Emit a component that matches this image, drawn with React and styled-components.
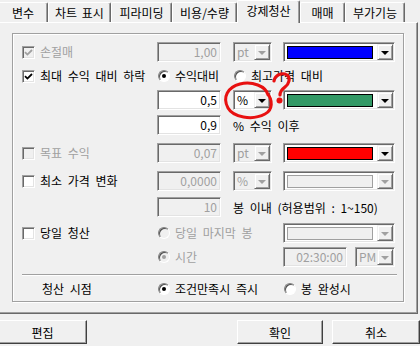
import React from 'react'
import styled, { createGlobalStyle } from 'styled-components'

const GlobalStyle = createGlobalStyle`
  html, body {
    margin: 0;
    padding: 0;
    background: #f0f0f0;
  }
  body {
    font-family: "Noto Sans CJK KR", "Noto Sans", sans-serif;
    font-size: 12px;
    color: #000;
    overflow: hidden;
  }
`

const Window = styled.div`
  position: relative;
  width: 420px;
  height: 346px;
  overflow: hidden;
  background: #f0f0f0;
`

const TabStrip = styled.div`
  display: flex;
  align-items: flex-end;
  height: 22px;
  margin-left: -2px;
`

const Tab = styled.div`
  position: relative;
  box-sizing: border-box;
  width: ${p => p.$w}px;
  height: ${p => (p.$active ? 23 : 20)}px;
  margin-bottom: ${p => (p.$active ? -1 : 0)}px;
  z-index: ${p => (p.$active ? 2 : 0)};
  display: flex;
  align-items: center;
  justify-content: center;
  padding-bottom: ${p => (p.$active ? 3 : 0)}px;
  background: #f0f0f0;
  border-top: 1px solid #fff;
  border-left: 1px solid #fff;
  border-right: 1px solid #696969;
  box-shadow: inset -1px 0 #a0a0a0;
  border-radius: 2px 2px 0 0;
  white-space: nowrap;
  word-spacing: 2px;
`

const Panel = styled.div`
  position: relative;
  z-index: 1;
  box-sizing: border-box;
  width: 420px;
  height: 292px;
  margin-left: -2px;
  padding: 10px 0 0 13px;
  border-top: 1px solid #fff;
  border-left: 1px solid #fff;
  border-right: 1px solid #696969;
  border-bottom: 1px solid #696969;
  box-shadow: inset -1px -1px #a0a0a0;
`

const GroupBox = styled.div`
  box-sizing: border-box;
  width: 392px;
  height: 269px;
  padding: 8px 0 0 9px;
  border: 1px solid #a0a0a0;
  box-shadow: inset 1px 1px #fff, 1px 1px #fff;
`

const Form = styled.div`
  display: grid;
  grid-template-columns: 135px 76px 50px 112px;
  grid-template-rows: 24px 24px 25px 28px 28px 26px 26px 24px 20px;
  align-items: start;
`

const Option = styled.div`
  display: flex;
  align-items: center;
  gap: ${p => (p.$radio ? 5 : 5)}px;
  height: 20px;
  white-space: nowrap;
  grid-column: ${p => p.$span || 'auto'};
`

const Label = styled.span`
  color: ${p => (p.$disabled ? '#a0a0a0' : '#000')};
  word-spacing: 3px;
  line-height: 20px;
`

const Text = styled.div`
  grid-column: ${p => p.$span || 'auto'};
  height: 20px;
  line-height: 22px;
  white-space: nowrap;
  word-spacing: 3px;
`

const CheckBox = styled.span`
  box-sizing: border-box;
  width: 13px;
  height: 13px;
  display: flex;
  align-items: center;
  justify-content: center;
  background: ${p => (p.$disabled ? '#f0f0f0' : '#fff')};
  border: 1px solid;
  border-color: #a0a0a0 #fff #fff #a0a0a0;
  box-shadow: inset 1px 1px #696969, inset -1px -1px #e3e3e3;
`

const RadioDot = styled.span`
  box-sizing: border-box;
  width: 12px;
  height: 12px;
  border-radius: 50%;
  display: flex;
  align-items: center;
  justify-content: center;
  margin-left: 1px;
  background: ${p => (p.$disabled ? '#f0f0f0' : '#fff')};
  border: 1px solid;
  border-color: #808080 #fff #fff #808080;
  box-shadow: inset 1px 1px #505050;

  &::after {
    content: '';
    display: ${p => (p.$checked ? 'block' : 'none')};
    width: 4px;
    height: 4px;
    border-radius: 50%;
    background: ${p => (p.$disabled ? '#a0a0a0' : '#000')};
  }
`

const Sunken = styled.div`
  box-sizing: border-box;
  height: 20px;
  border: 1px solid;
  border-color: #a0a0a0 #fff #fff #a0a0a0;
  box-shadow: inset 1px 1px #696969, inset -1px -1px #e3e3e3;
`

const Field = styled(Sunken)`
  width: ${p => p.$w || 64}px;
  padding-right: 3px;
  text-align: right;
  line-height: 18px;
  background: ${p => (p.$disabled ? '#f0f0f0' : '#fff')};
  color: ${p => (p.$disabled ? '#a0a0a0' : '#000')};
`

const Combo = styled(Sunken)`
  width: ${p => p.$w}px;
  display: flex;
  align-items: stretch;
  padding: 1px;
  background: ${p => (p.$disabled ? '#f0f0f0' : '#fff')};
  color: ${p => (p.$disabled ? '#a0a0a0' : '#000')};
`

const ComboValue = styled.span`
  flex: 1;
  padding-left: 2px;
  line-height: 16px;
  overflow: hidden;
`

const ArrowButton = styled.span`
  box-sizing: border-box;
  width: 16px;
  display: flex;
  align-items: center;
  justify-content: center;
  background: #f0f0f0;
  border: 1px solid;
  border-color: #f0f0f0 #696969 #696969 #f0f0f0;
  box-shadow: inset 1px 1px #fff, inset -1px -1px #a0a0a0;

  &::after {
    content: '';
    border-left: 4px solid transparent;
    border-right: 4px solid transparent;
    border-top: 4px solid ${p => (p.$disabled ? '#a0a0a0' : '#000')};
    margin-top: 1px;
  }
`

const Swatch = styled.span`
  flex: 1;
  margin: 2px 4px 1px 2px;
  border: 1px solid ${p => (p.$disabled ? '#a0a0a0' : '#000')};
  background: ${p => p.$color || '#f0f0f0'};
`

const ColorCombo = styled(Sunken)`
  width: 112px;
  display: flex;
  align-items: stretch;
  padding: 1px;
  background: #fff;
`

const TimeGroup = styled.div`
  display: flex;
  gap: 8px;
`

const Separator = styled.div`
  width: 375px;
  height: 0;
  margin-top: 7px;
  border-top: 1px solid #a0a0a0;
  border-bottom: 1px solid #fff;
`

const SettleRow = styled.div`
  display: grid;
  grid-template-columns: 135px 126px 112px;
  margin-top: 3px;
  align-items: center;
`

const RowTitle = styled.span`
  padding-left: 20px;
  word-spacing: 3px;
  line-height: 18px;
`

const Footer = styled.div`
  display: flex;
  justify-content: space-between;
  padding-top: 6px;
`

const ButtonGroup = styled.div`
  display: flex;
  gap: 9px;
`

const Button = styled.div`
  box-sizing: border-box;
  width: ${p => p.$w}px;
  height: 24px;
  margin-left: ${p => p.$ml || 0}px;
  display: flex;
  align-items: center;
  justify-content: center;
  background: #f0f0f0;
  border: 1px solid;
  border-color: #fff #404040 #404040 #fff;
  box-shadow: inset -1px -1px #a0a0a0;
`

const Annotation = styled.svg`
  position: absolute;
  left: 0;
  top: 0;
  pointer-events: none;
  z-index: 5;
`

const Check = ({ checked, disabled, children }) => (
  <Option>
    <CheckBox $disabled={disabled}>
      {checked && (
        <svg width="9" height="9" viewBox="0 0 9 9">
          <path
            d="M1 4.2 L3.4 6.6 L8 2"
            fill="none"
            stroke={disabled ? '#a0a0a0' : '#000'}
            strokeWidth="1.8"
          />
        </svg>
      )}
    </CheckBox>
    <Label $disabled={disabled}>{children}</Label>
  </Option>
)

const Radio = ({ checked, disabled, span, children }) => (
  <Option $radio $span={span}>
    <RadioDot $checked={checked} $disabled={disabled} />
    <Label $disabled={disabled}>{children}</Label>
  </Option>
)

const Select = ({ value, disabled, w = 39 }) => (
  <Combo $w={w} $disabled={disabled}>
    <ComboValue>{value}</ComboValue>
    <ArrowButton $disabled={disabled} />
  </Combo>
)

const ColorSelect = ({ color, disabled }) => (
  <ColorCombo>
    <Swatch $color={color} $disabled={disabled} />
    <ArrowButton $disabled={disabled} />
  </ColorCombo>
)

const tabs = [
  { label: '변수', w: 50 },
  { label: '차트 표시', w: 63 },
  { label: '피라미딩', w: 61 },
  { label: '비용/수량', w: 65 },
  { label: '강제청산', w: 63, active: true },
  { label: '매매', w: 45 },
  { label: '부가기능', w: 60 }
]

const Empty = styled.div``

export default function App() {
  return (
    <Window>
      <GlobalStyle />
      <TabStrip>
        {tabs.map(t => (
          <Tab key={t.label} $w={t.w} $active={t.active}>
            {t.label}
          </Tab>
        ))}
      </TabStrip>
      <Panel>
        <GroupBox>
          <Form>
            <Check checked disabled>손절매</Check>
            <Field $disabled>1,00</Field>
            <Select value="pt" disabled />
            <ColorSelect color="#0000ff" />

            <Check checked>최대 수익 대비 하락</Check>
            <Radio checked>수익대비</Radio>
            <Radio span="span 2">최고가격 대비</Radio>

            <Empty />
            <Field>0,5</Field>
            <Select value="%" />
            <ColorSelect color="#339966" />

            <Empty />
            <Field>0,9</Field>
            <Text $span="span 2">% 수익 이후</Text>

            <Check disabled>목표 수익</Check>
            <Field $disabled>0,07</Field>
            <Select value="pt" disabled />
            <ColorSelect color="#ff0000" />

            <Check>최소 가격 변화</Check>
            <Field $disabled>0,0000</Field>
            <Select value="%" disabled />
            <ColorSelect disabled />

            <Empty />
            <Field $disabled>10</Field>
            <Text $span="span 2">봉 이내 (허용범위 : 1~150)</Text>

            <Check>당일 청산</Check>
            <Radio disabled span="span 2">당일 마지막 봉</Radio>
            <ColorSelect disabled />

            <Empty />
            <Radio checked disabled span="span 2">시간</Radio>
            <TimeGroup>
              <Field $disabled $w={64}>02:30:00</Field>
              <Select value="PM" disabled w={40} />
            </TimeGroup>
          </Form>
          <Separator />
          <SettleRow>
            <RowTitle>청산 시점</RowTitle>
            <Radio checked>조건만족시 즉시</Radio>
            <Radio>봉 완성시</Radio>
          </SettleRow>
        </GroupBox>
      </Panel>
      <Footer>
        <Button $w={89} $ml={-2}>편집</Button>
        <ButtonGroup>
          <Button $w={86}>확인</Button>
          <Button $w={88}>취소</Button>
        </ButtonGroup>
      </Footer>
      <Annotation width="420" height="346" viewBox="0 0 420 346">
        <path
          d="M268 95 C266 86 252 81 240 84 C228 87 222 97 228 108 C233 117 252 121 265 114 C273 110 273 100 267 93"
          fill="none"
          stroke="#e81010"
          strokeWidth="3"
          strokeLinecap="round"
        />
        <path
          d="M274 81 C275 75 282 72 287 75 C291 78 289 84 285 87 C281 90 280 92 280 95"
          fill="none"
          stroke="#e81010"
          strokeWidth="3.2"
          strokeLinecap="round"
        />
        <circle cx="279.5" cy="100.5" r="3" fill="#e81010" />
      </Annotation>
    </Window>
  )
}
